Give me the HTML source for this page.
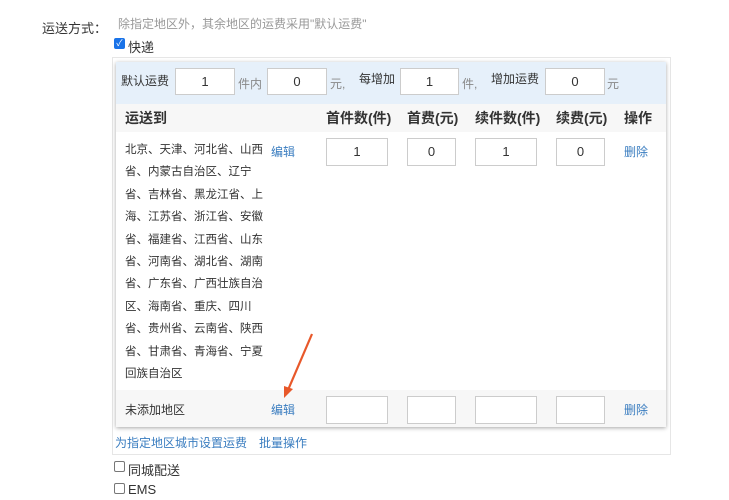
<!DOCTYPE html><html><head><meta charset="utf-8"><style>
body{margin:0;width:729px;height:500px;background:#fff;font-family:"Liberation Sans","Noto Sans CJK SC",sans-serif;font-size:12px;color:#333;position:relative;overflow:hidden}
.a{position:absolute;white-space:nowrap}
.in{position:absolute;border:1px solid #ccc;background:#fff;box-sizing:border-box;text-align:center;font-size:13px;color:#333}
.lk{color:#3a7dc0}
.cb{position:absolute;width:11px;height:11px;border:1px solid #777;border-radius:2px;background:#fff;box-sizing:border-box}
</style></head><body>
<div class="a" style="left:42px;top:18px;font-size:13px">运送方式：</div>
<div class="a" style="left:118px;top:15px;color:#999">除指定地区外，其余地区的运费采用"默认运费"</div>
<div class="cb" style="left:114px;top:38px;background:#1a73e8;border-color:#1a73e8;color:#fff;font-size:9px;line-height:9px;text-align:center">✓</div>
<div class="a" style="left:128px;top:37px;font-size:13px">快递</div>
<div class="a" style="left:112px;top:57px;width:559px;height:398px;border:1px solid #e6e6e6;box-sizing:border-box"></div>
<div class="a" style="left:116px;top:62px;width:550px;height:365px;background:#fff;box-shadow:0 1px 4px rgba(0,0,0,.35)"></div>
<div class="a" style="left:116px;top:62px;width:550px;height:42px;background:#e6f0fa"></div>
<div class="a" style="left:116px;top:104px;width:550px;height:28px;background:#f7f7f7"></div>
<div class="a" style="left:116px;top:390px;width:550px;height:37px;background:#f7f7f7"></div>
<div class="a" style="left:121px;top:72px">默认运费</div>
<div class="in" style="left:175px;top:68px;width:60px;height:27px;line-height:25px">1</div>
<div class="a" style="left:238px;top:75px;color:#888">件内</div>
<div class="in" style="left:267px;top:68px;width:60px;height:27px;line-height:25px">0</div>
<div class="a" style="left:330px;top:75px;color:#888">元,</div>
<div class="a" style="left:359px;top:70px">每增加</div>
<div class="in" style="left:400px;top:68px;width:59px;height:27px;line-height:25px">1</div>
<div class="a" style="left:462px;top:75px;color:#888">件,</div>
<div class="a" style="left:491px;top:70px">增加运费</div>
<div class="in" style="left:545px;top:68px;width:60px;height:27px;line-height:25px">0</div>
<div class="a" style="left:607px;top:75px;color:#888">元</div>
<div class="a" style="left:125px;top:108px;font-size:14px;font-weight:bold">运送到</div>
<div class="a" style="left:326px;top:108px;font-size:14px;font-weight:bold">首件数(件)</div>
<div class="a" style="left:407px;top:108px;font-size:14px;font-weight:bold">首费(元)</div>
<div class="a" style="left:475px;top:108px;font-size:14px;font-weight:bold">续件数(件)</div>
<div class="a" style="left:556px;top:108px;font-size:14px;font-weight:bold">续费(元)</div>
<div class="a" style="left:624px;top:108px;font-size:14px;font-weight:bold">操作</div>
<div class="a" style="left:125px;top:139px;line-height:22.4px;font-size:11.5px">北京、天津、河北省、山西<br>省、内蒙古自治区、辽宁<br>省、吉林省、黑龙江省、上<br>海、江苏省、浙江省、安徽<br>省、福建省、江西省、山东<br>省、河南省、湖北省、湖南<br>省、广东省、广西壮族自治<br>区、海南省、重庆、四川<br>省、贵州省、云南省、陕西<br>省、甘肃省、青海省、宁夏<br>回族自治区</div>
<div class="a lk" style="left:271px;top:143px">编辑</div>
<div class="in" style="left:326px;top:138px;width:62px;height:28px;line-height:26px">1</div>
<div class="in" style="left:407px;top:138px;width:49px;height:28px;line-height:26px">0</div>
<div class="in" style="left:475px;top:138px;width:62px;height:28px;line-height:26px">1</div>
<div class="in" style="left:556px;top:138px;width:49px;height:28px;line-height:26px">0</div>
<div class="a lk" style="left:624px;top:143px">删除</div>
<div class="a" style="left:125px;top:401px">未添加地区</div>
<div class="a lk" style="left:271px;top:401px">编辑</div>
<div class="in" style="left:326px;top:396px;width:62px;height:28px"></div>
<div class="in" style="left:407px;top:396px;width:49px;height:28px"></div>
<div class="in" style="left:475px;top:396px;width:62px;height:28px"></div>
<div class="in" style="left:556px;top:396px;width:49px;height:28px"></div>
<div class="a lk" style="left:624px;top:401px">删除</div>
<svg class="a" style="left:280px;top:330px" width="40" height="72"><line x1="32" y1="4" x2="8" y2="60" stroke="#e8582a" stroke-width="2.2"/><polygon points="4,68 4,56 13,59" fill="#e8582a"/></svg>
<div class="a lk" style="left:115px;top:434px">为指定地区城市设置运费</div>
<div class="a lk" style="left:259px;top:434px">批量操作</div>
<div class="cb" style="left:114px;top:461px"></div>
<div class="a" style="left:128px;top:460px;font-size:13px">同城配送</div>
<div class="cb" style="left:114px;top:483px"></div>
<div class="a" style="left:128px;top:482px;font-size:13px">EMS</div>
</body></html>
